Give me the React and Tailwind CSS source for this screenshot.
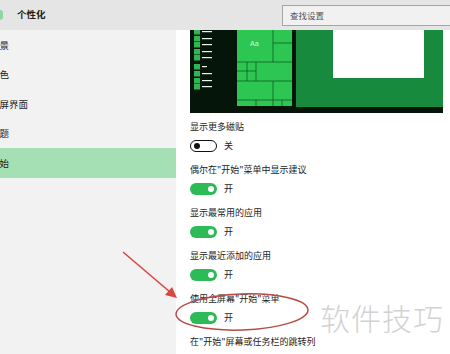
import React from "react";

const navItems = ["背景", "颜色", "锁屏界面", "主题", "开始"];

const settings = [
  { label: "显示更多磁贴", on: false },
  { label: '偶尔在"开始"菜单中显示建议', on: true },
  { label: "显示最常用的应用", on: true },
  { label: "显示最近添加的应用", on: true },
  { label: '使用全屏幕"开始"菜单', on: true },
  { label: '在"开始"屏幕或任务栏的跳转列', on: true, clip: true },
];

function Toggle({ on }) {
  if (on) {
    return (
      <div className="w-[27px] h-[12px] rounded-full bg-[#2dbb58] flex items-center justify-end pr-[3px]">
        <div className="w-[6px] h-[6px] rounded-full bg-white" />
      </div>
    );
  }
  return (
    <div className="w-[27px] h-[12px] rounded-full border-[1.5px] border-[#111] flex items-center pl-[3px]">
      <div className="w-[6px] h-[6px] rounded-full bg-[#111]" />
    </div>
  );
}

function StartPreview() {
  const rows = [1, 8, 14, 21, 27, 36, 43, 50, 56];
  return (
    <svg width="253" height="83" viewBox="0 0 253 83" className="block">
      <rect x="0" y="0" width="253" height="83" fill="#06150a" />
      {/* left app list */}
      {rows.map((y, i) => (
        <g key={i}>
          <rect x="4" y={y - 2} width="6" height="5.5" fill="#2fb552" />
          <rect x="12" y={y} width={i === 5 ? 5 : 10} height="1.2" fill="#e8f5ea" />
        </g>
      ))}
      {/* tiles */}
      <g transform="translate(47,0)">
        <rect x="0" y="0" width="55" height="76" fill="#2dc653" />
        <g stroke="#0c5a25" strokeWidth="0.8">
          <line x1="36" y1="0" x2="36" y2="32" />
          <line x1="36" y1="13" x2="55" y2="13" />
          <line x1="0" y1="32" x2="55" y2="32" />
          <line x1="10" y1="32" x2="10" y2="51" />
          <line x1="19" y1="32" x2="19" y2="51" />
          <line x1="0" y1="41" x2="19" y2="41" />
          <line x1="0" y1="51" x2="55" y2="51" />
          <line x1="36" y1="51" x2="36" y2="76" />
          <line x1="0" y1="70" x2="55" y2="70" />
          <line x1="19" y1="70" x2="19" y2="76" />
          <line x1="45" y1="70" x2="45" y2="76" />
        </g>
        <text x="13" y="16" fill="#d8f7df" fontSize="7" fontFamily="Liberation Sans, sans-serif">
          Aa
        </text>
      </g>
      <rect x="106" y="0" width="147" height="77" fill="#178a3e" />
      <rect x="143" y="0" width="91" height="48" fill="#ffffff" />
    </svg>
  );
}

export default function App() {
  return (
    <div
      className="relative w-[450px] h-[354px] overflow-hidden bg-white text-[#1c1c1c]"
      style={{ fontFamily: '"Noto Sans CJK SC", "Noto Sans", sans-serif' }}
    >
      {/* header */}
      <div className="h-[30px] bg-[#e5e5e5] flex items-center">
        <div className="w-[3px] h-[10px] bg-[#8fd7a2] rounded-r-sm" />
        <div className="ml-[14px] text-[9.5px] font-bold leading-none">个性化</div>
        <div className="ml-auto mr-[-4px] w-[172px] h-[21px] border border-[#a5a5a5] bg-[#f1f1f1] flex items-center pl-[7px] text-[8.5px] text-[#555]">
          查找设置
        </div>
      </div>

      <div className="flex h-[324px]">
        {/* sidebar */}
        <div className="w-[176px] bg-[#f2f2f2]">
          {navItems.map((n, i) => (
            <div
              key={n}
              className={`h-[29.5px] flex items-center text-[9.5px] whitespace-nowrap ${
                i === 4 ? "bg-[#a4e0b3]" : ""
              }`}
            >
              <span className="ml-[-10px]">{n}</span>
            </div>
          ))}
        </div>

        {/* content */}
        <div className="flex-1 pl-[14px]">
          <StartPreview />
          <div className="mt-[7px]">
            {settings.map((s, i) => (
              <div key={i} className="h-[43px]">
                <div
                  className={`h-[14px] leading-[14px] text-[9px] whitespace-nowrap ${
                    s.clip ? "w-[126px] overflow-hidden" : ""
                  }`}
                >
                  {s.label}
                </div>
                <div className="mt-[5px] flex items-center gap-[7px] text-[9px]">
                  <Toggle on={s.on} />
                  <span>{s.on ? "开" : "关"}</span>
                </div>
              </div>
            ))}
          </div>
        </div>
      </div>

      {/* annotations */}
      <svg className="absolute left-0 top-0 pointer-events-none" width="450" height="354">
        <line x1="123" y1="252" x2="170" y2="292" stroke="#d8473e" strokeWidth="1.6" />
        <polygon points="177,298 165,295 172,287" fill="#d8473e" />
        <ellipse
          cx="242"
          cy="312"
          rx="66"
          ry="18"
          fill="none"
          stroke="#b84a43"
          strokeWidth="1.5"
          transform="rotate(-2 242 312)"
        />
      </svg>
      <div className="absolute left-[320px] top-[302px] text-[30px] leading-none text-[#d2d2d2] font-light tracking-[1px]">
        软件技巧
      </div>
    </div>
  );
}
